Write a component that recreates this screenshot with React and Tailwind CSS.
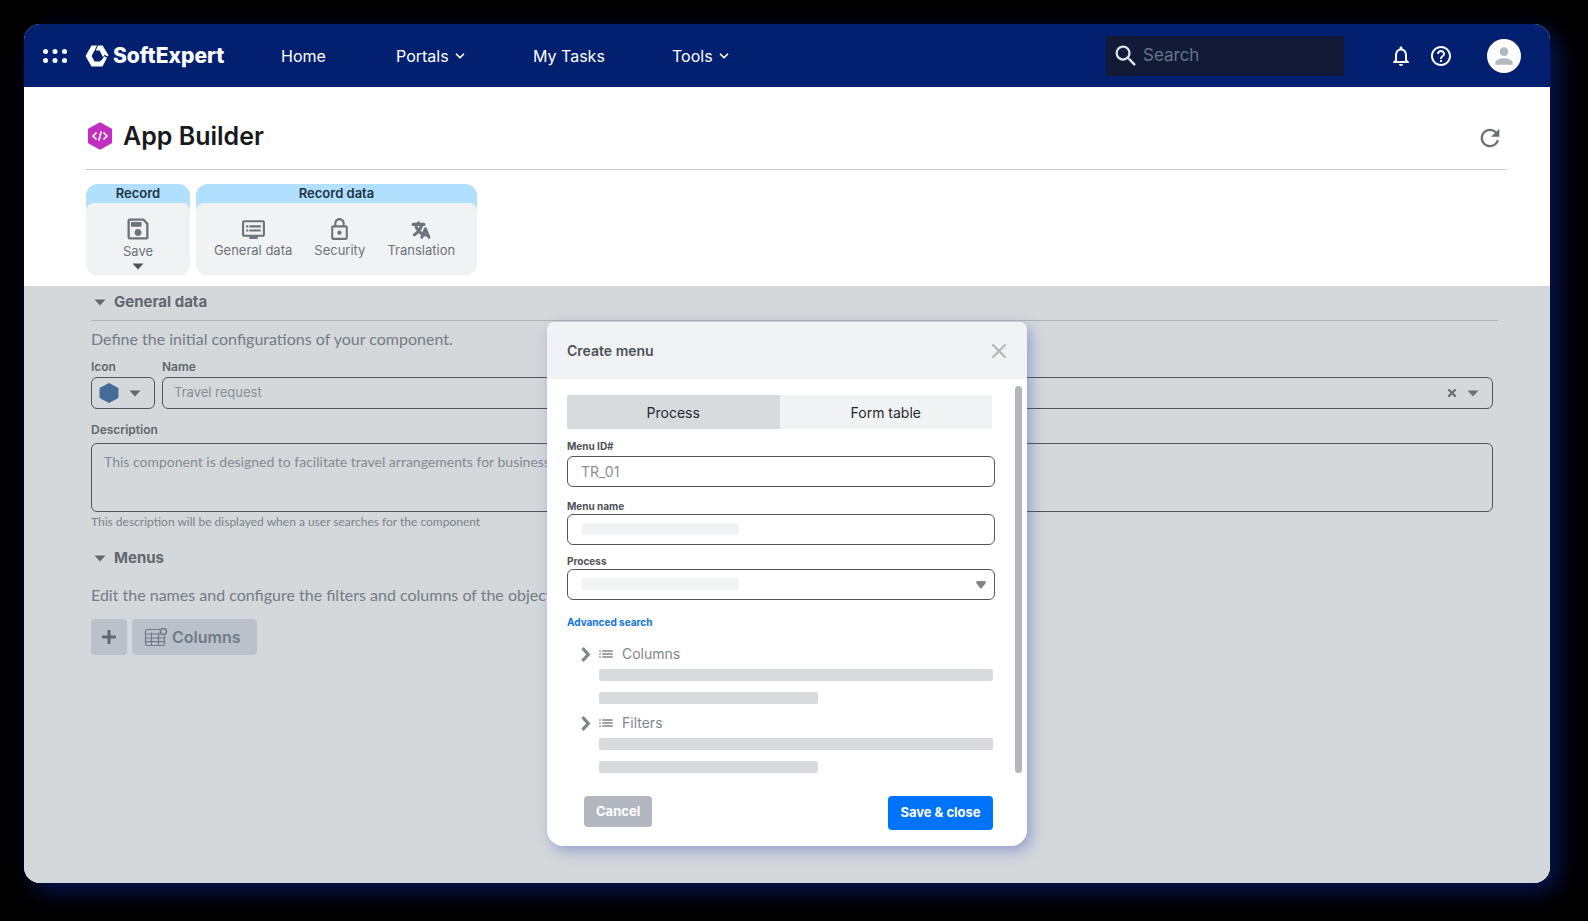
import { useState } from 'react'
import {
  MdSearch, MdNotificationsNone, MdHelpOutline, MdPerson, MdRefresh,
  MdOutlineSave, MdOutlineLock, MdDvr, MdList,
} from 'react-icons/md'
import { FaPlus, FaTimes } from 'react-icons/fa'
import { IoLanguage } from 'react-icons/io5'
import { ChevronDown, X } from 'lucide-react'

const NAV = [
  { label: 'Home', width: 'w-[115px]' },
  { label: 'Portals', width: 'w-[137px]', menu: true },
  { label: 'My Tasks', width: 'w-[139px]' },
  { label: 'Tools', width: 'w-[80px]', menu: true },
]

/* Small filled triangle pointing down */
function Caret({ className = '' }) {
  return (
    <svg viewBox="0 0 12 7" className={`w-3 h-[7px] shrink-0 ${className}`} fill="currentColor" aria-hidden="true">
      <path d="M0.5 0.5h11L6 6.5z" />
    </svg>
  )
}

function Logo() {
  return (
    <a href="#" className="flex items-center gap-1 w-[196px] text-white">
      <svg viewBox="0 0 24 22" className="w-6 h-[22px]" fill="white" aria-hidden="true">
        {/* left arm, then right arm */}
        <path d="M6.500 0.500H12L9.800 5 6.600 11l3 5.500h5l2-1.500 2.700-3.800 2.700 1.600L17.500 21.500h-11L0.500 11z" />
        <path d="M13 0.500h4.500L23.500 10l-0.800 1.600-3.200-1.800-1.500 2.500L14.500 5.500h-3.800z" />
      </svg>
      <span className="text-[21px] font-extrabold">SoftExpert</span>
    </a>
  )
}

function TopBar() {
  return (
    <header className="flex items-center h-[63px] bg-[#021f70] text-white pl-[19px] pr-[29px]">
      <button aria-label="Apps" className="w-[42px] shrink-0">
        <svg viewBox="0 0 24 14" className="w-6 h-[14px]" fill="white" aria-hidden="true">
          {[2.5, 12, 21.5].map(x => [2.5, 11.5].map(y => (
            <circle key={`${x}-${y}`} cx={x} cy={y} r="2.500" />
          )))}
        </svg>
      </button>
      <Logo />
      <nav className="flex text-base">
        {NAV.map(item => (
          <a key={item.label} href="#" className={`flex items-center gap-1 ${item.width}`}>
            {item.label}
            {item.menu && <ChevronDown size={14} strokeWidth={3} />}
          </a>
        ))}
      </nav>
      <label className="ml-auto flex items-center w-[238px] h-10 px-[6px] bg-[#121a35]">
        <MdSearch size={28} className="text-[#dbe4f5] shrink-0" />
        <input
          type="search"
          placeholder="Search"
          aria-label="Search"
          className="w-full min-w-0 ml-[3px] bg-transparent text-[17px] outline-none placeholder:text-[#69738f]"
        />
      </label>
      <button aria-label="Notifications" className="ml-[45px]"><MdNotificationsNone size={24} /></button>
      <button aria-label="Help" className="ml-4"><MdHelpOutline size={24} /></button>
      <button aria-label="Account" className="ml-[34px] flex items-center justify-center size-[34px] rounded-full bg-white text-[#b4b8c0]">
        <MdPerson size={26} />
      </button>
    </header>
  )
}

function ToolGroup({ title, className, children }) {
  return (
    <section className={`rounded-xl bg-[#b1dffe] overflow-hidden ${className}`}>
      <h2 className="h-[19px] text-center text-[13px] leading-[19px] font-semibold text-[#203344]">{title}</h2>
      <div className="flex justify-center h-[72px] rounded-t-lg bg-[#f1f2f4] text-[#6b737c] text-[13px] leading-4">
        {children}
      </div>
    </section>
  )
}

function Tool({ icon: Icon, label, className = '' }) {
  return (
    <button className={`flex flex-col items-center pt-[14px] ${className}`}>
      <Icon size={25} />
      <span>{label}</span>
    </button>
  )
}

function TranslationIcon() {
  return (
    <span className="flex items-center justify-center h-[25px]">
      <IoLanguage size={20} stroke="currentColor" strokeWidth={34} />
    </span>
  )
}

function SectionTitle({ children }) {
  return (
    <h2 className="flex items-center gap-2 pl-[3px] text-[15px] leading-6 font-bold text-[#5f676f]">
      <Caret />
      {children}
    </h2>
  )
}

const FIELD = 'w-full border border-[#50565c] rounded-md bg-transparent outline-none'
const LABEL = 'block text-xs leading-4 font-semibold text-[#5f676f]'
const MODAL_LABEL = 'block text-[10px] leading-[14px] font-bold text-[#4d5257]'

function GeneralData() {
  return (
    <>
      <div className="mt-1 pb-[6px] mr-[-5px] border-b border-[#afb4b8]">
        <SectionTitle>General data</SectionTitle>
      </div>
      <p className="mt-[6px] font-['Lato',sans-serif] text-base leading-6 text-[#737c86]">
        Define the initial configurations of your component.
      </p>
      <div className="flex gap-[7px] mt-2">
        <div className="w-16">
          <label htmlFor="icon" className={LABEL}>Icon</label>
          <button id="icon" className={`${FIELD} mt-[2px] h-8 flex items-center gap-[10px] px-[7px] text-[#5f676f]`}>
            <svg viewBox="0 0 20 20" className="size-5" aria-hidden="true">
              <path d="M10 0.500l9 4.800v9.400l-9 4.800-9-4.800V5.300z" fill="#446c97" stroke="#446c97" strokeLinejoin="round" />
            </svg>
            <Caret />
          </button>
        </div>
        <div className="flex-1">
          <label htmlFor="name" className={LABEL}>Name</label>
          <div className={`${FIELD} mt-[2px] h-8 flex items-center pl-[11px] pr-[13px] text-[#6a7178]`}>
            <input
              id="name"
              placeholder="Travel request"
              className="flex-1 bg-transparent text-[13px] outline-none placeholder:text-[#878f97]"
            />
            <button aria-label="Clear"><FaTimes size={12} /></button>
            <button aria-label="Open list" className="ml-[9px]"><Caret /></button>
          </div>
        </div>
      </div>
      <label htmlFor="description" className={`${LABEL} mt-[13px]`}>Description</label>
      <textarea
        id="description"
        placeholder="This component is designed to facilitate travel arrangements for business"
        className={`${FIELD} block mt-[5px] h-[69px] px-3 py-[7px] resize-none font-['Lato',sans-serif] text-sm leading-[22px] placeholder:text-[#828a93]`}
      />
      <p className="mt-[2px] font-['Lato',sans-serif] text-xs leading-4 text-[#7b838c]">
        This description will be displayed when a user searches for the component
      </p>
    </>
  )
}

function Menus() {
  return (
    <>
      <div className="mt-4"><SectionTitle>Menus</SectionTitle></div>
      <p className="mt-[13px] font-['Lato',sans-serif] text-base leading-6 text-[#737c86]">
        Edit the names and configure the filters and columns of the object
      </p>
      <div className="flex gap-[5px] mt-3">
        <button aria-label="Add menu" className="flex items-center justify-center size-9 rounded bg-[#bac1ca] text-[#5f676f]">
          <FaPlus size={16} />
        </button>
        <button className="flex items-center gap-1 h-9 pl-3 pr-4 rounded bg-[#bac1ca] text-[#717b86] text-base font-semibold">
          <svg viewBox="0 0 24 20" className="w-6 h-5" fill="none" stroke="currentColor" strokeWidth="1.200" aria-hidden="true">
            <path d="M16 2.500H3.500a2 2 0 0 0-2 2v12a2 2 0 0 0 2 2h15a2 2 0 0 0 2-2V8.500M1.500 7h15.500M1.500 11h19M1.500 14.700h19M7.500 5.500v13M14.500 5.500v13" />
            <circle cx="19.500" cy="4.500" r="3" strokeWidth="1.600" />
          </svg>
          Columns
        </button>
      </div>
    </>
  )
}

function SearchRow({ label }) {
  return (
    <div>
      <button className="flex items-center h-6 pl-[14px] text-[#82868a]">
        <svg viewBox="0 0 10 15" className="w-[10px] h-[15px]" fill="none" stroke="currentColor" strokeWidth="3.200" aria-hidden="true">
          <path d="M1.500 1.200L7.300 7.500 1.500 13.800" />
        </svg>
        <MdList size={18} className="ml-[6px]" />
        <span className="ml-[7px] text-sm">{label}</span>
      </button>
      <div className="mt-[3px] ml-8 mr-0.5 h-3 rounded-xs bg-[#d8dbdd]" />
      <div className="mt-[11px] ml-8 w-[219px] h-3 rounded-xs bg-[#d8dbdd]" />
    </div>
  )
}

function CreateMenuModal() {
  const [tab, setTab] = useState('Process')

  return (
    <div
      role="dialog"
      aria-label="Create menu"
      className="absolute top-9 left-1/2 -translate-x-1/2 w-[480px] rounded-t-lg rounded-b-2xl bg-white shadow-[4px_5px_14px_rgba(60,80,190,0.42)]"
    >
      <div className="flex items-center justify-between h-[57px] pl-5 pr-4 rounded-t-lg bg-[#f1f2f4]">
        <h2 className="text-sm font-semibold text-[#4d5257]">Create menu</h2>
        <button aria-label="Close" className="text-[#b1b5ba]"><X size={24} /></button>
      </div>

      <div className="flex pt-[7px] pl-5 pr-[5px]">
        <form className="flex-1 pt-[9px]" onSubmit={e => e.preventDefault()}>
          <div className="flex mr-[3px] h-[34px] rounded-xs overflow-hidden bg-[#f1f2f4] text-sm text-[#26292d]">
            {['Process', 'Form table'].map(name => (
              <button
                key={name}
                type="button"
                onClick={() => setTab(name)}
                className={`flex-1 pt-px ${tab === name ? 'bg-[#d7dbde]' : ''}`}
              >
                {name}
              </button>
            ))}
          </div>

          <label htmlFor="menu-id" className={`${MODAL_LABEL} mt-[10px]`}>Menu ID#</label>
          <input
            id="menu-id"
            placeholder="TR_01"
            className={`${FIELD} block mt-[3px] h-[31px] px-[13px] text-sm placeholder:text-[#8b8f93]`}
          />

          <label htmlFor="menu-name" className={`${MODAL_LABEL} mt-3`}>Menu name</label>
          <div className="relative mt-[1px]">
            <input id="menu-name" className={`${FIELD} block h-[31px] px-3 text-sm`} />
            <span className="absolute left-[15px] top-[9px] w-[157px] h-3 rounded-xs bg-[#f1f2f4]" />
          </div>

          <label htmlFor="process" className={`${MODAL_LABEL} mt-[9px]`}>Process</label>
          <div className="relative mt-[1px]">
            <select id="process" className={`${FIELD} block h-[31px] px-3 text-sm appearance-none`} />
            <span className="absolute left-[15px] top-[9px] w-[157px] h-3 rounded-xs bg-[#f1f2f4]" />
            <svg viewBox="0 0 10 8" className="absolute right-[9px] top-3 w-[10px] h-2" fill="#808488" aria-hidden="true">
              <path d="M0.500 0h9v2.500L5 8 0.500 2.500z" />
            </svg>
          </div>

          <a href="#" className="block w-fit mt-[15px] text-[10px] leading-[14px] font-bold text-[#0b74dc]">Advanced search</a>

          <div className="flex flex-col gap-[7px] mt-[13px]">
            <SearchRow label="Columns" />
            <SearchRow label="Filters" />
          </div>
        </form>
        <div className="ml-5 w-[7px] h-[387px] rounded-full bg-[#b3b6ba]" />
      </div>

      <div className="flex items-start justify-between mt-[23px] pb-4 pl-[37px] pr-[34px] text-[13px] font-bold text-white">
        <button className="h-[31px] px-3 rounded bg-[#b3b7c0]">Cancel</button>
        <button className="h-[34px] w-[105px] rounded bg-[#0073fb]">Save &amp; close</button>
      </div>
    </div>
  )
}

export default function App() {
  return (
    <div className="flex min-h-screen pt-6 pl-6 pr-[38px] pb-[39px] bg-black font-['Inter',sans-serif]">
      <div className="flex-1 flex flex-col rounded-2xl overflow-hidden bg-white shadow-[8px_8px_22px_rgba(8,30,110,0.75)]">
        <TopBar />

        <div className="pl-[62px] pr-[43px] pb-[11px]">
          <div className="flex items-center h-[83px] pt-4 pl-[1px] pr-[3px] border-b border-[#c9ccce]">
            <svg viewBox="0 0 26 28" className="w-[26px] h-7" fill="none" aria-hidden="true">
              <path d="M13 1.500l11 6v13l-11 6-11-6v-13z" fill="#c02fc0" stroke="#c02fc0" strokeWidth="2" strokeLinejoin="round" />
              <path d="M9.500 10.500L6 14l3.500 3.500M16.500 10.500L20 14l-3.500 3.500M14.200 9.500l-2.400 9" stroke="white" strokeWidth="1.700" />
            </svg>
            <h1 className="ml-[10px] text-[25px] leading-8 font-semibold text-[#17191c]">App Builder</h1>
            <button aria-label="Refresh" className="ml-auto pt-1 text-[#6b6f73]"><MdRefresh size={28} /></button>
          </div>

          <div className="flex gap-[6px] mt-[14px]">
            <ToolGroup title="Record" className="w-[104px]">
              <button className="flex flex-col items-center pt-3">
                <MdOutlineSave size={28} />
                <span>Save</span>
                <Caret className="mt-[4px] text-[#4b5157]" />
              </button>
            </ToolGroup>
            <ToolGroup title="Record data" className="w-[281px]">
              <Tool icon={MdDvr} label="General data" />
              <Tool icon={MdOutlineLock} label="Security" className="ml-[22px]" />
              <Tool icon={TranslationIcon} label="Translation" className="ml-[22px] mr-1" />
            </ToolGroup>
          </div>
        </div>

        <main className="relative flex-1 min-h-[597px] pl-[67px] pr-[57px] bg-[#d4d8db]">
          <GeneralData />
          <Menus />
          <CreateMenuModal />
        </main>
      </div>
    </div>
  )
}
